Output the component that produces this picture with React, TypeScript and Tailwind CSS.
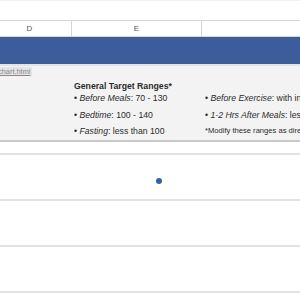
import React from "react";

const font = { fontFamily: '"Liberation Sans", Arial, sans-serif' };

function HeaderRow() {
  return (
    <div className="flex h-[17px] border-y border-[#d6d6d6] bg-white text-[8px] text-[#555]">
      <div className="ml-[-12px] flex w-[84px] shrink-0 items-center justify-center border-r border-[#d6d6d6]">D</div>
      <div className="flex w-[130px] shrink-0 items-center justify-center border-r border-[#d6d6d6]">E</div>
      <div className="flex-1" />
    </div>
  );
}

function Ranges() {
  return (
    <div className="flex h-[74px] flex-col bg-[#f3f3f3] text-[#2b2b2b]">
      <div className="flex h-[9px] mt-[1px]">
        <span className="ml-[-4px] bg-[#e4e4e4] px-[2px] text-[7.4px] leading-[9px] text-[#8a8a8a] underline">
          chart.html
        </span>
      </div>
      <div className="mt-[6px] flex">
        <div className="ml-[74px] w-[131px] shrink-0 whitespace-nowrap">
          <div className="h-[8px] text-[8.7px] font-bold leading-[8px]">General Target Ranges*</div>
          <div className="text-[8.7px] leading-[16.5px]">
            • <i>Before Meals</i>: 70 - 130
          </div>
          <div className="text-[8.7px] leading-[16.5px]">
            • <i>Bedtime</i>: 100 - 140
          </div>
          <div className="text-[8.7px] leading-[16.5px]">
            • <i>Fasting</i>: less than 100
          </div>
        </div>
        <div className="whitespace-nowrap">
          <div className="h-[8px]" />
          <div className="text-[8.7px] leading-[16.5px]">
            • <i>Before Exercise</i>: with in range
          </div>
          <div className="text-[8.7px] leading-[16.5px]">
            • <i>1-2 Hrs After Meals</i>: less than 180
          </div>
          <div className="text-[7.6px] leading-[16.5px]">*Modify these ranges as directed</div>
        </div>
      </div>
    </div>
  );
}

export default function App() {
  return (
    <div className="h-[300px] w-[300px] overflow-hidden bg-white" style={font}>
      <div className="h-[20px] border-t border-[#f0f0f0] bg-white" />
      <HeaderRow />
      <div className="h-[27px] bg-[#3b5d9b]" />
      <div className="h-[2px] bg-[#dfe3ea]" />
      <Ranges />
      <div className="h-[2px] bg-[#c8c8c8]" />
      <div className="h-[11px]" />
      <div className="h-[46px] border-t-2 border-[#e2e2e2] pl-[156px] pt-[23px]">
        <div className="h-[6px] w-[6px] rounded-full bg-[#3460a8]" />
      </div>
      <div className="h-[46px] border-t-2 border-[#e2e2e2]" />
      <div className="h-[46px] border-t-2 border-[#e2e2e2]" />
      <div className="h-[46px] border-t-2 border-[#e2e2e2]" />
    </div>
  );
}
